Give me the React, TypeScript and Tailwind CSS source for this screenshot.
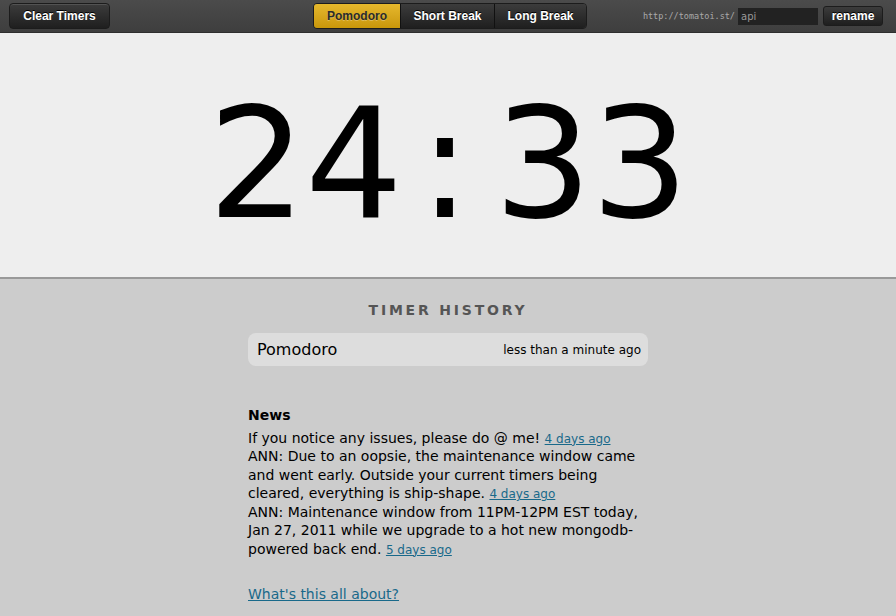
import React from 'react'

const sans = "font-['Lucida_Grande','DejaVu_Sans',sans-serif]"
const btn = "font-['Liberation_Sans',Arial,sans-serif] font-bold"

function TopBar() {
  return (
    <header className="flex h-[33px] items-center border-b border-[#2e2e2e] bg-gradient-to-b from-[#4b4b4b] to-[#3e3e3e] px-[9px]">
      <div className="flex flex-1">
        <button className={`h-[26px] w-[101px] rounded-[4px] border border-[#1c1c1c] bg-gradient-to-b from-[#3c3c3c] to-[#1f1f1f] text-[12px] text-white [text-shadow:0_-1px_0_#000] shadow-[inset_0_1px_0_rgba(255,255,255,0.12)] ${btn}`}>
          Clear Timers
        </button>
      </div>
      <div className={`ml-[8px] flex h-[26px] overflow-hidden rounded-[4px] border border-[#1c1c1c] text-[12px] ${btn}`}>
        <button className="w-[86px] bg-gradient-to-b from-[#e6b82c] to-[#c99709] text-[#2b2b2b] [text-shadow:0_1px_0_rgba(255,255,255,0.3)]">
          Pomodoro
        </button>
        <button className="w-[94px] border-l border-[#111] bg-gradient-to-b from-[#3c3c3c] to-[#1f1f1f] text-white [text-shadow:0_-1px_0_#000]">
          Short Break
        </button>
        <button className="w-[92px] border-l border-[#111] bg-gradient-to-b from-[#3c3c3c] to-[#1f1f1f] text-white [text-shadow:0_-1px_0_#000]">
          Long Break
        </button>
      </div>
      <div className="flex flex-1 items-center justify-end pr-[4px]">
        <span className="font-['DejaVu_Sans_Mono',monospace] text-[8.5px] text-[#aaaaaa]">http://tomatoi.st/</span>
        <input
          defaultValue="api"
          className="ml-[3px] h-[17px] w-[80px] bg-[#222] px-[3px] font-['DejaVu_Sans',sans-serif] text-[10px] text-[#999] outline-none"
        />
        <button className={`ml-[5px] h-[20px] w-[60px] rounded-[3px] border border-[#1c1c1c] bg-gradient-to-b from-[#3c3c3c] to-[#1f1f1f] text-[12px] text-white [text-shadow:0_-1px_0_#000] ${btn}`}>
          rename
        </button>
      </div>
    </header>
  )
}

export default function App() {
  return (
    <div className={`flex h-[616px] w-[896px] flex-col overflow-hidden bg-[#cccccc] ${sans}`}>
      <TopBar />
      <section className="flex h-[246px] items-center justify-center border-b-2 border-[#999] bg-[#eeeeee] pt-[18px]">
        <div className="flex items-center font-['DejaVu_Sans',sans-serif] text-[154px] leading-none tracking-[-1px] text-black">
          <span>24</span>
          <span className="ml-[17px] mr-[24px]">:</span>
          <span>33</span>
        </div>
      </section>
      <main className="mx-auto flex w-[400px] flex-col">
        <h2 className="mt-[21px] text-center text-[14px] font-bold tracking-[2.8px] text-[#555]">TIMER HISTORY</h2>
        <div className="mt-[12px] flex h-[33px] items-center justify-between rounded-[8px] bg-[#dddddd] pl-[9px] pr-[7px]">
          <span className="text-[16px] text-black">Pomodoro</span>
          <span className="text-[12px] text-black">less than a minute ago</span>
        </div>
        <div className="mt-[40px] text-[14px] leading-[18.5px] text-black">
          <h3 className="mb-[4px] font-bold">News</h3>
          <p>
            If you notice any issues, please do @ me!{' '}
            <a href="#" className="text-[12px] leading-none text-[#19698a] underline">4 days ago</a>
          </p>
          <p>
            ANN: Due to an oopsie, the maintenance window came and went early. Outside your current timers being cleared, everything is ship-shape.{' '}
            <a href="#" className="text-[12px] leading-none text-[#19698a] underline">4 days ago</a>
          </p>
          <p>
            ANN: Maintenance window from 11PM-12PM EST today, Jan 27, 2011 while we upgrade to a hot new mongodb-powered back end.{' '}
            <a href="#" className="text-[12px] leading-none text-[#19698a] underline">5 days ago</a>
          </p>
        </div>
        <a href="#" className="mt-[26px] self-start text-[14px] text-[#19698a] underline">What's this all about?</a>
      </main>
    </div>
  )
}
